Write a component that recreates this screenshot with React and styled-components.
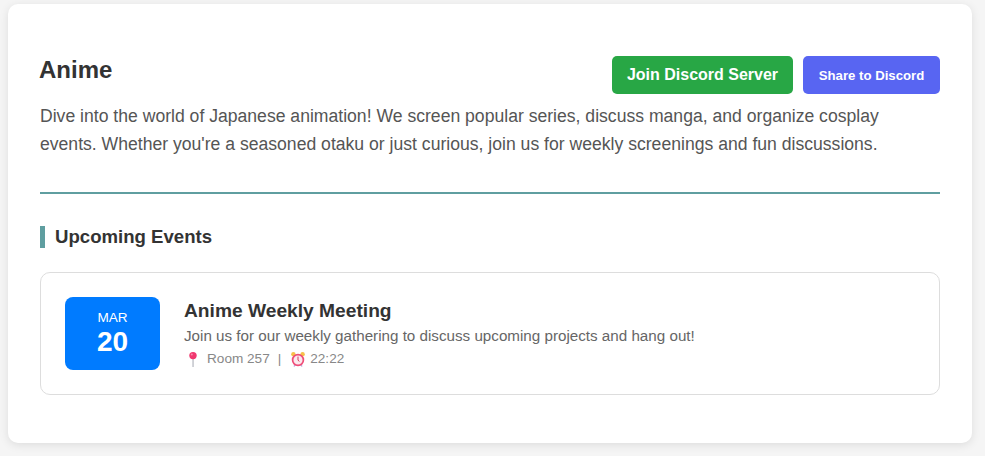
import React from "react";
import styled, { createGlobalStyle } from "styled-components";

const Global = createGlobalStyle`
  html, body { margin: 0; padding: 0; background: #f5f5f5; }
  body { font-family: "Liberation Sans", Arial, sans-serif; color: #333; }
`;
const Page = styled.div`
  padding: 4px 13px 13px 8px;
`;
const Card = styled.main`
  background: #fff;
  border-radius: 10px;
  box-shadow: 0 2px 10px rgba(0, 0, 0, 0.1);
  padding: 32px;
  height: 439px;
  box-sizing: border-box;
`;
const Header = styled.header`
  padding-top: 20px;
  padding-bottom: 34px;
  border-bottom: 2px solid #5f9ea0;
`;
const TitleRow = styled.div`
  display: flex;
  justify-content: space-between;
  align-items: flex-start;
`;
const Title = styled.h1`
  margin: 0 0 0 -1px;
  font-size: 24px;
  line-height: 28px;
  font-weight: 700;
  color: #333;
`;
const Actions = styled.div`
  display: flex;
  gap: 10px;
`;
const Btn = styled.a`
  display: flex;
  align-items: center;
  justify-content: center;
  height: 38px;
  box-sizing: border-box;
  width: ${(p) => p.$w}px;
  border-radius: 5px;
  background: ${(p) => p.$bg};
  color: #fff;
  font-weight: 700;
  font-size: ${(p) => p.$fs}px;
`;
const Desc = styled.p`
  margin: 8px 0 0;
  font-size: 17.6px;
  line-height: 28px;
  color: #555;
`;
const Section = styled.section`
  margin-top: 32px;
`;
const SectionTitle = styled.h2`
  margin: 0;
  border-left: 5px solid #5f9ea0;
  padding-left: 10px;
  font-size: 18.6px;
  line-height: 22px;
  font-weight: 700;
  color: #333;
`;
const Event = styled.article`
  margin-top: 24px;
  display: flex;
  gap: 24px;
  align-items: center;
  padding: 24px;
  height: 123px;
  box-sizing: border-box;
  border: 1px solid #ddd;
  border-radius: 10px;
`;
const DateBox = styled.div`
  width: 95px;
  height: 73px;
  flex: none;
  background: #007bff;
  color: #fff;
  border-radius: 8px;
  display: flex;
  flex-direction: column;
  align-items: center;
  justify-content: center;
`;
const Month = styled.span`
  font-size: 13.6px;
  line-height: 16px;
`;
const Day = styled.span`
  font-size: 28px;
  line-height: 32px;
  font-weight: 700;
`;
const EventBody = styled.div`
  display: flex;
  flex-direction: column;
`;
const EventTitle = styled.h3`
  margin: 0;
  font-size: 19.2px;
  line-height: 24px;
  font-weight: 700;
  color: #333;
`;
const EventDesc = styled.p`
  margin: 3px 0 0;
  font-size: 15.2px;
  line-height: 20px;
  color: #666;
`;
const Meta = styled.div`
  margin-top: 3px;
  display: flex;
  align-items: center;
  font-size: 13.6px;
  line-height: 20px;
  color: #888;
`;
const MetaIcon = styled.svg`
  width: 16px;
  height: 16px;
  flex: none;
  margin-left: ${(p) => p.$ml}px;
  margin-right: ${(p) => p.$mr}px;
`;
const Divider = styled.span`
  margin: 0 10px 0 8px;
`;

const Pin = () => (
  <MetaIcon viewBox="0 0 16 16" aria-hidden="true" $ml={1} $mr={6}>
    <rect x="7.4" y="6" width="1.3" height="10" fill="#b9bcc4" />
    <circle cx="8" cy="4.6" r="3.7" fill="#f0386f" />
    <circle cx="6.8" cy="3.4" r="1" fill="#f98bab" />
  </MetaIcon>
);

const Clock = () => (
  <MetaIcon viewBox="0 0 16 16" aria-hidden="true" $ml={-1} $mr={4}>
    <path d="M4 15.5 5.5 13M12 15.5 10.5 13" stroke="#b9a6dc" strokeWidth="1.4" fill="none" />
    <circle cx="3.4" cy="3.2" r="2.2" fill="#f7c04a" />
    <circle cx="12.6" cy="3.2" r="2.2" fill="#f7c04a" />
    <circle cx="8" cy="9" r="5.4" fill="#fbe9ee" stroke="#ef4d78" strokeWidth="1.7" />
    <path d="M8 5.6V9.2L9.4 10.4" stroke="#d8395f" strokeWidth="1" fill="none" />
  </MetaIcon>
);

export default function App() {
  return (
    <>
      <Global />
      <Page>
        <Card>
          <Header>
            <TitleRow>
              <Title>Anime</Title>
              <Actions>
                <Btn $w={181} $bg="#28a745" $fs={16}>Join Discord Server</Btn>
                <Btn $w={137} $bg="#5865f2" $fs={13.2}>Share to Discord</Btn>
              </Actions>
            </TitleRow>
            <Desc>
              Dive into the world of Japanese animation! We screen popular series, discuss manga, and organize cosplay events. Whether you're a seasoned otaku or just curious, join us for weekly screenings and fun discussions.
            </Desc>
          </Header>
          <Section>
            <SectionTitle>Upcoming Events</SectionTitle>
            <Event>
              <DateBox>
                <Month>MAR</Month>
                <Day>20</Day>
              </DateBox>
              <EventBody>
                <EventTitle>Anime Weekly Meeting</EventTitle>
                <EventDesc>Join us for our weekly gathering to discuss upcoming projects and hang out!</EventDesc>
                <Meta>
                  <Pin />
                  <span>Room 257</span>
                  <Divider>|</Divider>
                  <Clock />
                  <span>22:22</span>
                </Meta>
              </EventBody>
            </Event>
          </Section>
        </Card>
      </Page>
    </>
  );
}
